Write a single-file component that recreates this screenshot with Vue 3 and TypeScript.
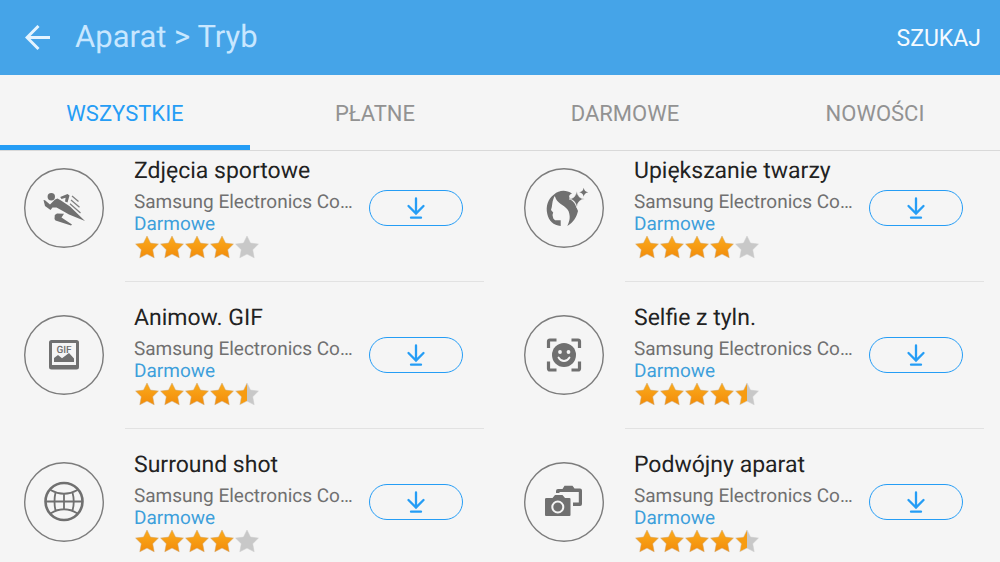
<script setup lang="ts">
import { ref } from 'vue'

type Icon = 'sport' | 'beauty' | 'gif' | 'selfie' | 'surround' | 'dual'

interface Mode {
  title: string
  icon: Icon
  rating: number
}

const tabs: string[] = ['WSZYSTKIE', 'PŁATNE', 'DARMOWE', 'NOWOŚCI']
const active = ref(0)

const modes: Mode[] = [
  { title: 'Zdjęcia sportowe', icon: 'sport', rating: 4 },
  { title: 'Upiększanie twarzy', icon: 'beauty', rating: 4 },
  { title: 'Animow. GIF', icon: 'gif', rating: 4.5 },
  { title: 'Selfie z tyln.', icon: 'selfie', rating: 4.5 },
  { title: 'Surround shot', icon: 'surround', rating: 4 },
  { title: 'Podwójny aparat', icon: 'dual', rating: 4.5 },
]

const starFill = (rating: number, n: number): string =>
  rating >= n ? 'url(#star-full)' : rating >= n - 0.5 ? 'url(#star-half)' : '#c8c8c8'
</script>

<template>
  <div class="page">
    <svg class="defs" aria-hidden="true">
      <defs>
        <linearGradient id="star-full" x1="0" y1="0" x2="0" y2="1">
          <stop offset="0" stop-color="#fbab1c" />
          <stop offset="1" stop-color="#f28c0a" />
        </linearGradient>
        <linearGradient id="star-half">
          <stop offset="0.5" stop-color="#f79c12" />
          <stop offset="0.5" stop-color="#c8c8c8" />
        </linearGradient>
      </defs>
    </svg>

    <header class="bar">
      <button class="back" type="button" aria-label="Wstecz">
        <svg width="26" height="26" viewBox="0 0 26 26" fill="none" stroke="#e4f4ff" stroke-width="3">
          <path d="M25 12.500H3M13.500 1L2 12.500L13.500 24" />
        </svg>
      </button>
      <h1 class="heading">Aparat &gt; Tryb</h1>
      <button class="search" type="button">SZUKAJ</button>
    </header>

    <nav class="tabs">
      <button
        v-for="(tab, i) in tabs"
        :key="tab"
        type="button"
        class="tab"
        :class="{ active: i === active }"
        @click="active = i"
      >{{ tab }}</button>
    </nav>

    <main class="list">
      <article v-for="mode in modes" :key="mode.title" class="item">
        <svg class="icon" width="80" height="80" viewBox="0 0 80 80" fill="#707070" aria-hidden="true">
          <circle cx="40" cy="40" r="39.300" fill="none" stroke="#7c7c7c" stroke-width="1.400" />
          <g v-if="mode.icon === 'sport'">
            <circle cx="27.300" cy="28.700" r="3.700" />
            <path d="M19.500 32L21 32.300L26 36.500L31 31.500L33.500 30.500L37 32.500L46 38.500L61 53L45 46.500L38 42.500L32.500 39.500L28.500 39.500L26.500 42L21 38Z" />
            <path d="M36.200 29L43.500 26L45.500 27.500L43.500 34.500L41 33.500L41.600 29.800L37.500 31Z" />
            <path d="M33 45.500L40 45.800L37.500 49.500L48 56.500L47 57.500L31.500 52.500L30.500 51L30.800 47Z" />
            <path d="M48 28L54.500 33.500M47 32L55.500 39.300M46 35.800L56.500 45" fill="none" stroke="#808080" stroke-width="1.300" />
          </g>
          <g v-else-if="mode.icon === 'beauty'">
            <path d="M30 26.500C35 22 42 21.500 48 25.500C45 26.500 44.500 28.500 46 30.500C48 33 50 34 51.500 37L54 43C52.500 49 49.500 54.500 43.300 58C46 52.500 46.500 48.500 44.500 43C42 38 34.500 36 32 31L30.800 28C29.500 30 28.800 32.500 28.300 35.500L27.800 39L27 42L29.200 44.500L28.500 47L29.300 50.500L31 52.300H36.700V58C29.500 57.500 24.500 52.500 23.300 46C21.500 38 24 31 30 26.500Z" />
            <path d="M52.700 23Q53.700 30.500 60.500 31Q53.700 31.700 52.700 39.500Q51.700 31.700 45 31Q51.700 30.500 52.700 23Z" stroke="#f5f5f5" stroke-width=".6" />
            <path d="M59.700 19.800Q60.300 23.800 64.300 24.300Q60.300 24.800 59.700 28.800Q59.100 24.800 55.200 24.300Q59.100 23.800 59.700 19.800Z" />
          </g>
          <g v-else-if="mode.icon === 'gif'">
            <path fill-rule="evenodd" d="M27.500 25H52.500Q55 25 55 27.500V52Q55 54.500 52.500 54.500H27.500Q25 54.500 25 52V27.500Q25 25 27.500 25ZM28 28V50H52V28Z" />
            <path d="M30 47V43L34 40L38 43.300L45 38L50 43.500V47Z" />
            <text x="40" y="37.500" text-anchor="middle" class="gif">GIF</text>
          </g>
          <g v-else-if="mode.icon === 'selfie'">
            <path d="M24.500 33V26.500Q24.500 25 26 25H32.500M47.500 25H54Q55.500 25 55.500 26.500V33M55.500 46.500V53.500Q55.500 55 54 55H47.500M32.500 55H26Q24.500 55 24.500 53.500V46.500" fill="none" stroke="#707070" stroke-width="3.200" />
            <circle cx="40" cy="40" r="12" />
            <circle cx="36" cy="37" r="1.900" fill="#f5f5f5" />
            <circle cx="44.500" cy="37" r="1.900" fill="#f5f5f5" />
            <path d="M34.500 42.500Q36.500 46 40 46Q43.500 46 45.500 42.500" fill="none" stroke="#f5f5f5" stroke-width="1.800" stroke-linecap="round" />
          </g>
          <g v-else-if="mode.icon === 'surround'" fill="none" stroke="#707070" stroke-width="1.800">
            <circle cx="40" cy="39.500" r="18.500" stroke-width="2.600" />
            <path d="M26.500 28Q40 35.500 53.500 28M26.500 51.500Q40 43 53.500 51.500M22 39.500H58M40 31.500V47.500M31.500 30.500Q29.500 39.500 31.500 48.500M48.500 30.500Q51 39.500 48.500 48.500" />
          </g>
          <g v-else>
            <path d="M32 31V29Q32 27 34 27H38.500L40.500 23.800H48.500L50.500 26.500H56Q58 26.500 58 28.500V42Q58 44 56 44H49V40.500H54.800V30H35.500V31Z" />
            <path d="M22.500 36H28.500L31 33H38.500L41 36H45.500Q46.500 36 46.500 37V53Q46.500 54 45.500 54H22Q21 54 21 53V37Q21 36 22.500 36Z" />
            <circle cx="33.800" cy="45" r="5.500" fill="none" stroke="#f5f5f5" stroke-width="2" />
          </g>
        </svg>

        <div class="body">
          <div class="text">
            <h2 class="title">{{ mode.title }}</h2>
            <p class="maker">Samsung Electronics Co…</p>
            <p class="price">Darmowe</p>
            <div class="stars" role="img" :aria-label="`Ocena ${mode.rating} na 5`">
              <svg v-for="n in 5" :key="n" width="25" height="25" viewBox="0 0 25 25">
                <path
                  d="M13 1L16.500 8.100L24.400 9.100L18.700 14.700L20.200 22.800L13 19.100L5.800 22.800L7.300 14.700L1.600 9.100L9.500 8.100Z"
                  :fill="starFill(mode.rating, n)"
                  :stroke="mode.rating >= n ? '#cfa671' : '#cccccc'"
                  stroke-width=".5"
                  stroke-linejoin="round"
                />
              </svg>
            </div>
          </div>
          <button class="download" type="button" :aria-label="`Pobierz ${mode.title}`">
            <svg width="20" height="24" viewBox="0 0 20 24" fill="none" stroke="#259df5" stroke-width="2.300" stroke-linecap="round">
              <path d="M10 2.500V17.500M2.500 10L10 17.500L17.500 10M5 21.700H15" />
            </svg>
          </button>
        </div>
      </article>
    </main>
  </div>
</template>

<style>
body {
  margin: 0;
  background: #f5f5f5;
  overflow: hidden;
}
</style>

<style scoped>
.page {
  font-family: Roboto, sans-serif;
  text-rendering: geometricPrecision;
  color: #222;
}
.defs {
  position: absolute;
  width: 0;
  height: 0;
}
button {
  font: inherit;
  color: inherit;
  background: none;
  border: 0;
  padding: 0;
  cursor: pointer;
}
h1, h2, p {
  margin: 0;
  font-weight: 400;
}
.bar {
  display: flex;
  align-items: center;
  height: 75px;
  padding: 0 19px 0 25px;
  background: #45a4e8;
}
.back {
  display: flex;
}
.heading {
  flex: 1;
  margin-left: 24px;
  padding-bottom: 2px;
  font-size: 31px;
  line-height: 38px;
  color: #c8e7ff;
}
.search {
  padding-top: 2px;
  font-size: 23px;
  line-height: 28px;
  color: #f4faff;
}
.tabs {
  display: grid;
  grid-template-columns: repeat(4, 1fr);
  height: 75px;
  border-bottom: 1px solid #d9d9d9;
}
.tab {
  padding-top: 7px;
  font-size: 22px;
  color: #929292;
  border-bottom: 5px solid transparent;
}
.tab.active {
  color: #259df5;
  border-color: #259df5;
}
.list {
  display: grid;
  grid-template-columns: 1fr 1fr;
  row-gap: 20px;
  padding-top: 4px;
}
.item {
  display: flex;
  gap: 21px;
  min-width: 0;
  padding: 0 16px 0 24px;
}
.icon {
  flex: none;
  margin-top: 13px;
}
.gif {
  font-size: 10px;
  font-weight: 500;
}
.body {
  flex: 1;
  display: flex;
  gap: 14px;
  min-width: 0;
  padding: 0 21px 20px 9px;
  border-bottom: 1px solid #e2e2e2;
}
.text {
  flex: 1;
  min-width: 0;
}
.title {
  font-size: 23px;
  line-height: 32px;
  white-space: nowrap;
}
.maker {
  margin-top: 4px;
  font-size: 19px;
  line-height: 22px;
  color: #707070;
  white-space: nowrap;
  overflow: hidden;
  text-overflow: ellipsis;
}
.price {
  font-size: 19px;
  line-height: 22px;
  color: #3e9fdb;
}
.stars {
  display: flex;
  height: 26px;
}
.download {
  flex: none;
  display: flex;
  align-items: center;
  justify-content: center;
  width: 94px;
  height: 36px;
  margin-top: 35px;
  border: 1px solid #259df5;
  border-radius: 18px;
}
</style>
